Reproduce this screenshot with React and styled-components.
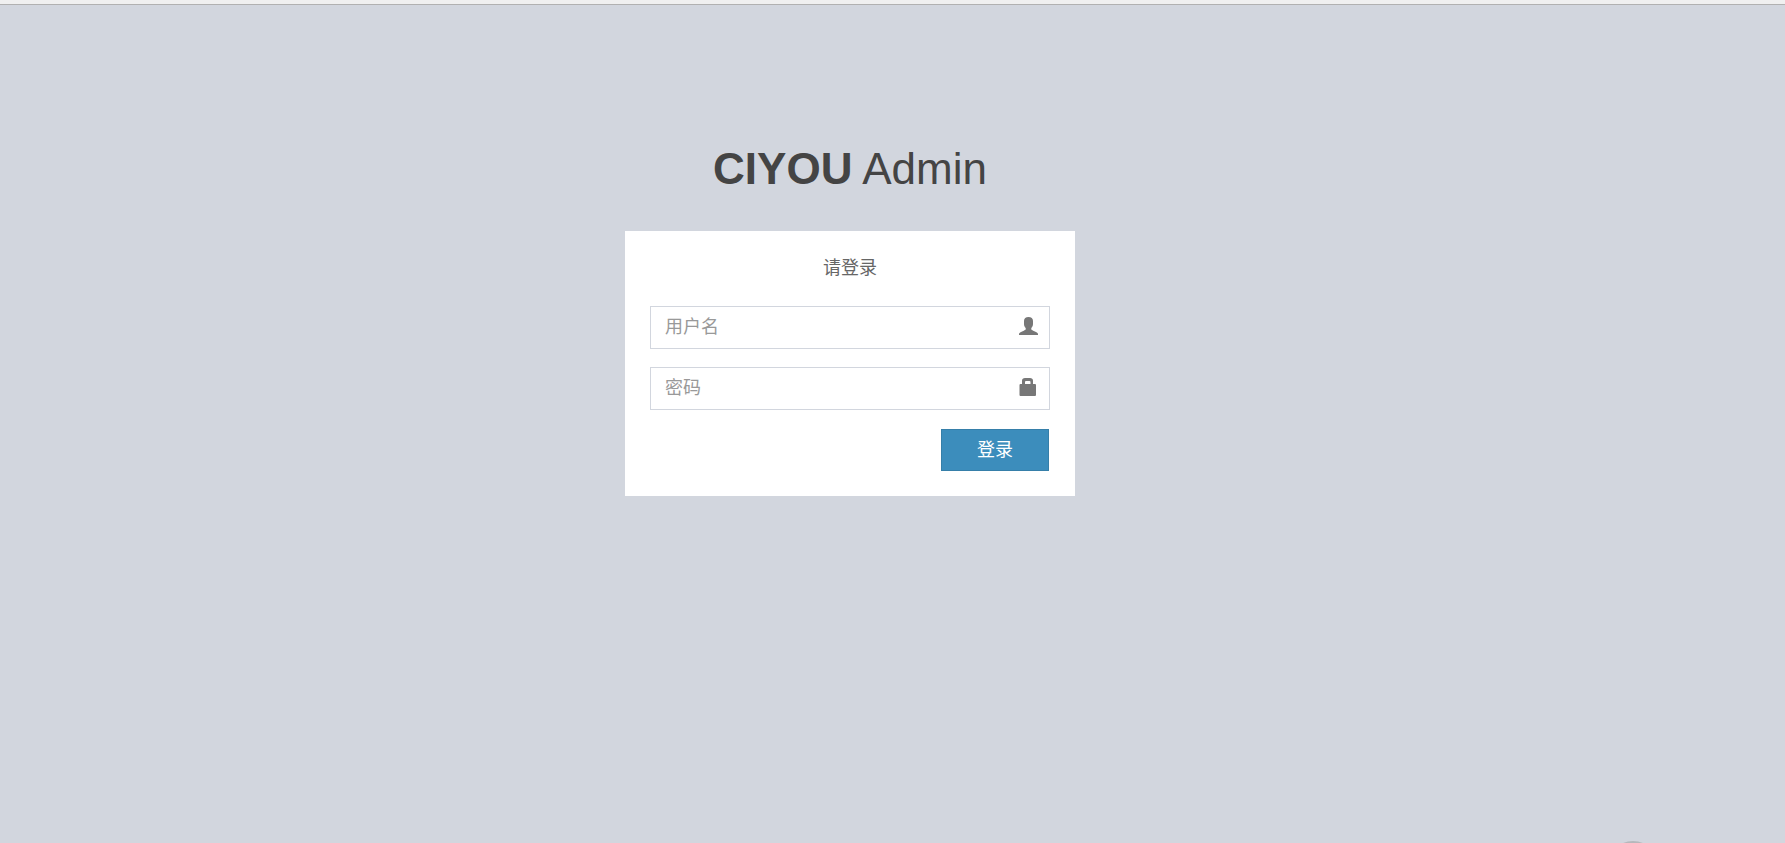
import React from "react";
import styled, { createGlobalStyle } from "styled-components";

const GlobalStyle = createGlobalStyle`
  *, *::before, *::after { box-sizing: border-box; }
  body {
    margin: 0;
    background: #d2d6de;
    color: #333;
    font-family: "Liberation Sans", "Noto Sans CJK SC", sans-serif;
    font-size: 18px;
    line-height: 25px;
  }
`;

const Page = styled.div`
  position: relative;
  min-height: 100vh;
  overflow: hidden;
`;

const TopEdge = styled.div`
  height: 5px;
  background: #f0f0f0;
  border-bottom: 1px solid #b1b1b1;
`;

const LoginArea = styled.main`
  display: flex;
  flex-direction: column;
  align-items: center;
  padding: 132px 85px 25px 0;
`;

const Brand = styled.h1`
  margin: 0 0 31px;
  font-size: 44px;
  line-height: 63px;
  font-weight: 400;
`;

const BrandLink = styled.a`
  color: #444;
  text-decoration: none;
`;

const Card = styled.form`
  width: 100%;
  max-width: 450px;
  padding: 25px;
  background: #fff;
`;

const Message = styled.p`
  margin: 0 0 25px;
  color: #666;
  text-align: center;
`;

const Field = styled.label`
  position: relative;
  display: block;
  margin-bottom: 18px;
`;

const TextInput = styled.input`
  display: block;
  width: 100%;
  height: 43px;
  padding: 0 52px 0 14px;
  border: 1px solid #d2d6de;
  border-radius: 0;
  background: #fff;
  color: #555;
  font: inherit;

  &::placeholder { color: #999; opacity: 1; }
  &:focus { outline: none; border-color: #3c8dbc; }
`;

const FieldIcon = styled.svg`
  position: absolute;
  top: 11px;
  right: 11px;
  width: 20px;
  height: 18px;
  fill: #777;
  pointer-events: none;
`;

const Actions = styled.div`
  display: flex;
  justify-content: flex-end;
  padding: 1px 1px 0 0;
`;

const SubmitButton = styled.button`
  width: 108px;
  height: 42px;
  padding: 0;
  border: 1px solid #367fa9;
  border-radius: 0;
  background: #3c8dbc;
  color: #fff;
  font: inherit;
  cursor: pointer;

  &:hover { background: #367fa9; }
`;

const FloatingDot = styled.div`
  position: absolute;
  right: 126px;
  bottom: -50px;
  width: 52px;
  height: 52px;
  border-radius: 50%;
  background: #b6b8bc;
`;

function UserIcon() {
  return (
    <FieldIcon viewBox="0 0 20 18" aria-hidden="true">
      <path d="M9.500 0C6.700 0 5 1.500 5 4V7C5 8.700 5.700 10.200 6.700 11V12.300C6.500 13 5.800 13.300 4.800 13.700L2 15C.8 15.600 0 16.400 0 17.200V18H19V17.200C19 16.400 18.200 15.600 17 15L14.200 13.700C13.200 13.300 12.500 13 12.300 12.300V11C13.300 10.200 14 8.700 14 7V4C14 1.500 12.300 0 9.500 0Z" />
    </FieldIcon>
  );
}

function LockIcon() {
  return (
    <FieldIcon viewBox="0 0 20 18" aria-hidden="true">
      <path
        fillRule="evenodd"
        d="M3 6V2.800C3 1 4.200 0 6 0H11C12.800 0 14 1 14 2.800V6H16Q17 6 17 7V17Q17 18 16 18H1.500Q.5 18 .5 17V7Q.5 6 1.500 6ZM6 6H11.500V4Q11.500 3 10.500 3H7Q6 3 6 4Z"
      />
    </FieldIcon>
  );
}

export default function App() {
  return (
    <>
      <GlobalStyle />
      <Page>
        <TopEdge />
        <LoginArea>
          <Brand>
            <BrandLink href="#"><b>CIYOU</b> Admin</BrandLink>
          </Brand>
          <Card onSubmit={(event) => event.preventDefault()}>
            <Message>请登录</Message>
            <Field>
              <TextInput type="text" name="username" placeholder="用户名" aria-label="用户名" />
              <UserIcon />
            </Field>
            <Field>
              <TextInput type="password" name="password" placeholder="密码" aria-label="密码" />
              <LockIcon />
            </Field>
            <Actions>
              <SubmitButton type="submit">登录</SubmitButton>
            </Actions>
          </Card>
        </LoginArea>
        <FloatingDot />
      </Page>
    </>
  );
}
